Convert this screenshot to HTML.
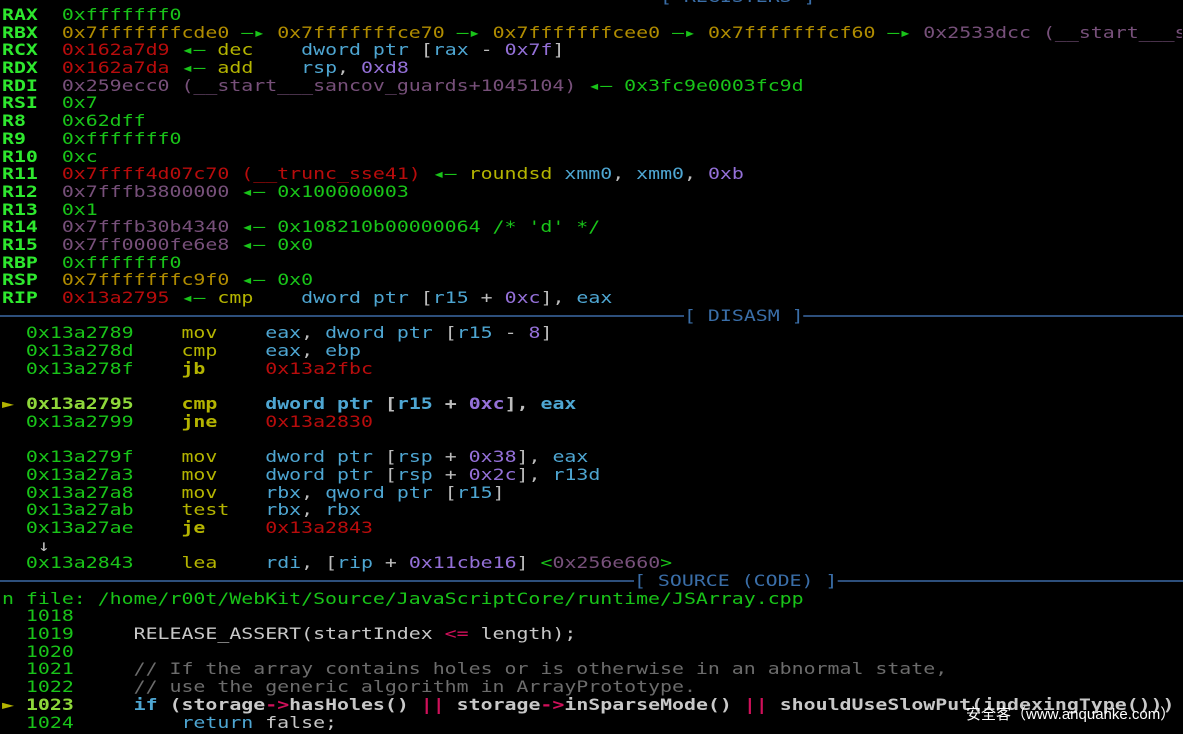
<!DOCTYPE html>
<html><head><meta charset="utf-8"><style>
body{margin:0;width:1183px;height:734px;background:#000;overflow:hidden;position:relative;font-family:"DejaVu Sans Mono","Liberation Mono",monospace;}
.l{position:absolute;left:2px;max-width:950px;overflow:hidden;height:18px;line-height:18px;font-size:16px;white-space:pre;transform:scaleX(1.242);transform-origin:0 50%;color:#c8c8c8}
.sep{position:absolute;left:0;width:1183px;height:2px;background:#2d4f7c}
.g{color:#19c419}.G{color:#2ee82e;font-weight:bold}.y{color:#b08c00}.r{color:#b80c0c}.p{color:#77507a}
.c{color:#4ea6d2}.v{color:#9470d8}.m{color:#b4b400}.w{color:#bdbdbd}.gr{color:#6c6c6c}.b{font-weight:bold}
.lg{color:#8ed83a}.k{color:#4ea6d2;font-weight:bold}.pk{color:#d0105a}.t{color:#3a6ea8}
.wm{position:absolute;left:966px;top:703px;font-family:"Liberation Sans","Noto Sans CJK SC",sans-serif;font-size:15px;color:#fff;white-space:nowrap}
</style></head><body>
<div class="sep" style="top:-2px"></div>
<div class="l" style="top:-12px;left:660px"><span class="t">[ REGISTERS ]</span></div>
<div class="l" style="top:6px"><span class="G">RAX</span>  <span class="g">0xfffffff0</span></div>
<div class="l" style="top:24px"><span class="G">RBX</span>  <span class="y">0x7fffffffcde0</span> <span class="g">—▸</span> <span class="y">0x7fffffffce70</span> <span class="g">—▸</span> <span class="y">0x7fffffffcee0</span> <span class="g">—▸</span> <span class="y">0x7fffffffcf60</span> <span class="g">—▸</span> <span class="p">0x2533dcc (__start___sancov_guards</span></div>
<div class="l" style="top:41px"><span class="G">RCX</span>  <span class="r">0x162a7d9</span> <span class="g">◂—</span> <span class="m">dec</span>    <span class="c">dword ptr</span> <span class="w">[</span><span class="c">rax</span> <span class="w">-</span> <span class="v">0x7f</span><span class="w">]</span></div>
<div class="l" style="top:59px"><span class="G">RDX</span>  <span class="r">0x162a7da</span> <span class="g">◂—</span> <span class="m">add</span>    <span class="c">rsp</span><span class="w">,</span> <span class="v">0xd8</span></div>
<div class="l" style="top:77px"><span class="G">RDI</span>  <span class="p">0x259ecc0 (__start___sancov_guards+1045104)</span> <span class="g">◂— 0x3fc9e0003fc9d</span></div>
<div class="l" style="top:94px"><span class="G">RSI</span>  <span class="g">0x7</span></div>
<div class="l" style="top:112px"><span class="G">R8</span>   <span class="g">0x62dff</span></div>
<div class="l" style="top:130px"><span class="G">R9</span>   <span class="g">0xfffffff0</span></div>
<div class="l" style="top:148px"><span class="G">R10</span>  <span class="g">0xc</span></div>
<div class="l" style="top:165px"><span class="G">R11</span>  <span class="r">0x7ffff4d07c70 (__trunc_sse41)</span> <span class="g">◂—</span> <span class="m">roundsd</span> <span class="c">xmm0</span><span class="w">,</span> <span class="c">xmm0</span><span class="w">,</span> <span class="v">0xb</span></div>
<div class="l" style="top:183px"><span class="G">R12</span>  <span class="p">0x7fffb3800000</span> <span class="g">◂— 0x100000003</span></div>
<div class="l" style="top:201px"><span class="G">R13</span>  <span class="g">0x1</span></div>
<div class="l" style="top:218px"><span class="G">R14</span>  <span class="p">0x7fffb30b4340</span> <span class="g">◂— 0x108210b00000064 /* 'd' */</span></div>
<div class="l" style="top:236px"><span class="G">R15</span>  <span class="p">0x7ff0000fe6e8</span> <span class="g">◂— 0x0</span></div>
<div class="l" style="top:254px"><span class="G">RBP</span>  <span class="g">0xfffffff0</span></div>
<div class="l" style="top:271px"><span class="G">RSP</span>  <span class="y">0x7fffffffc9f0</span> <span class="g">◂— 0x0</span></div>
<div class="l" style="top:289px"><span class="G">RIP</span>  <span class="r">0x13a2795</span> <span class="g">◂—</span> <span class="m">cmp</span>    <span class="c">dword ptr</span> <span class="w">[</span><span class="c">r15</span> <span class="w">+</span> <span class="v">0xc</span><span class="w">],</span> <span class="c">eax</span></div>
<div class="sep" style="top:315px"></div>
<div class="l" style="top:307px;left:684px;background:#000"><span class="t">[ DISASM ]</span></div>
<div class="l" style="top:324px">  <span class="g">0x13a2789</span>    <span class="m">mov</span>    <span class="c">eax</span><span class="w">,</span> <span class="c">dword ptr</span> <span class="w">[</span><span class="c">r15</span> <span class="w">-</span> <span class="v">8</span><span class="w">]</span></div>
<div class="l" style="top:342px">  <span class="g">0x13a278d</span>    <span class="m">cmp</span>    <span class="c">eax</span><span class="w">,</span> <span class="c">ebp</span></div>
<div class="l" style="top:360px">  <span class="g">0x13a278f</span>    <span class="m b">jb</span>     <span class="r">0x13a2fbc</span></div>
<div class="l b" style="top:395px"><span class="m">►</span> <span class="lg">0x13a2795</span>    <span class="m">cmp</span>    <span class="c">dword ptr</span> <span class="w">[</span><span class="c">r15</span> <span class="w">+</span> <span class="v">0xc</span><span class="w">],</span> <span class="c">eax</span></div>
<div class="l" style="top:413px">  <span class="g">0x13a2799</span>    <span class="m b">jne</span>    <span class="r">0x13a2830</span></div>
<div class="l" style="top:448px">  <span class="g">0x13a279f</span>    <span class="m">mov</span>    <span class="c">dword ptr</span> <span class="w">[</span><span class="c">rsp</span> <span class="w">+</span> <span class="v">0x38</span><span class="w">],</span> <span class="c">eax</span></div>
<div class="l" style="top:466px">  <span class="g">0x13a27a3</span>    <span class="m">mov</span>    <span class="c">dword ptr</span> <span class="w">[</span><span class="c">rsp</span> <span class="w">+</span> <span class="v">0x2c</span><span class="w">],</span> <span class="c">r13d</span></div>
<div class="l" style="top:484px">  <span class="g">0x13a27a8</span>    <span class="m">mov</span>    <span class="c">rbx</span><span class="w">,</span> <span class="c">qword ptr</span> <span class="w">[</span><span class="c">r15</span><span class="w">]</span></div>
<div class="l" style="top:501px">  <span class="g">0x13a27ab</span>    <span class="m">test</span>   <span class="c">rbx</span><span class="w">,</span> <span class="c">rbx</span></div>
<div class="l" style="top:519px">  <span class="g">0x13a27ae</span>    <span class="m b">je</span>     <span class="r">0x13a2843</span></div>
<div class="l" style="top:537px">   <span class="w">↓</span></div>
<div class="l" style="top:554px">  <span class="g">0x13a2843</span>    <span class="m">lea</span>    <span class="c">rdi</span><span class="w">,</span> <span class="w">[</span><span class="c">rip</span> <span class="w">+</span> <span class="v">0x11cbe16</span><span class="w">]</span> <span class="g">&lt;</span><span class="p">0x256e660</span><span class="g">&gt;</span></div>
<div class="sep" style="top:580px"></div>
<div class="l" style="top:572px;left:634px;background:#000"><span class="t">[ SOURCE (CODE) ]</span></div>
<div class="l" style="top:590px"><span class="g">n file: /home/r00t/WebKit/Source/JavaScriptCore/runtime/JSArray.cpp</span></div>
<div class="l" style="top:607px">  <span class="g">1018</span></div>
<div class="l" style="top:625px">  <span class="g">1019</span>     RELEASE_ASSERT(startIndex <span class="pk">&lt;=</span> length);</div>
<div class="l" style="top:643px">  <span class="g">1020</span></div>
<div class="l" style="top:660px">  <span class="g">1021</span>     <span class="gr">// If the array contains holes or is otherwise in an abnormal state,</span></div>
<div class="l" style="top:678px">  <span class="g">1022</span>     <span class="gr">// use the generic algorithm in ArrayPrototype.</span></div>
<div class="l b" style="top:696px"><span class="m">►</span> <span class="lg">1023</span>     <span class="k">if</span> (storage<span class="pk">-&gt;</span>hasHoles() <span class="pk">||</span> storage<span class="pk">-&gt;</span>inSparseMode() <span class="pk">||</span> shouldUseSlowPut(indexingType()))</div>
<div class="l" style="top:714px">  <span class="g">1024</span>         <span class="c">return</span> false;</div>
<div class="wm">安全客（www.anquanke.com）</div>
</body></html>
